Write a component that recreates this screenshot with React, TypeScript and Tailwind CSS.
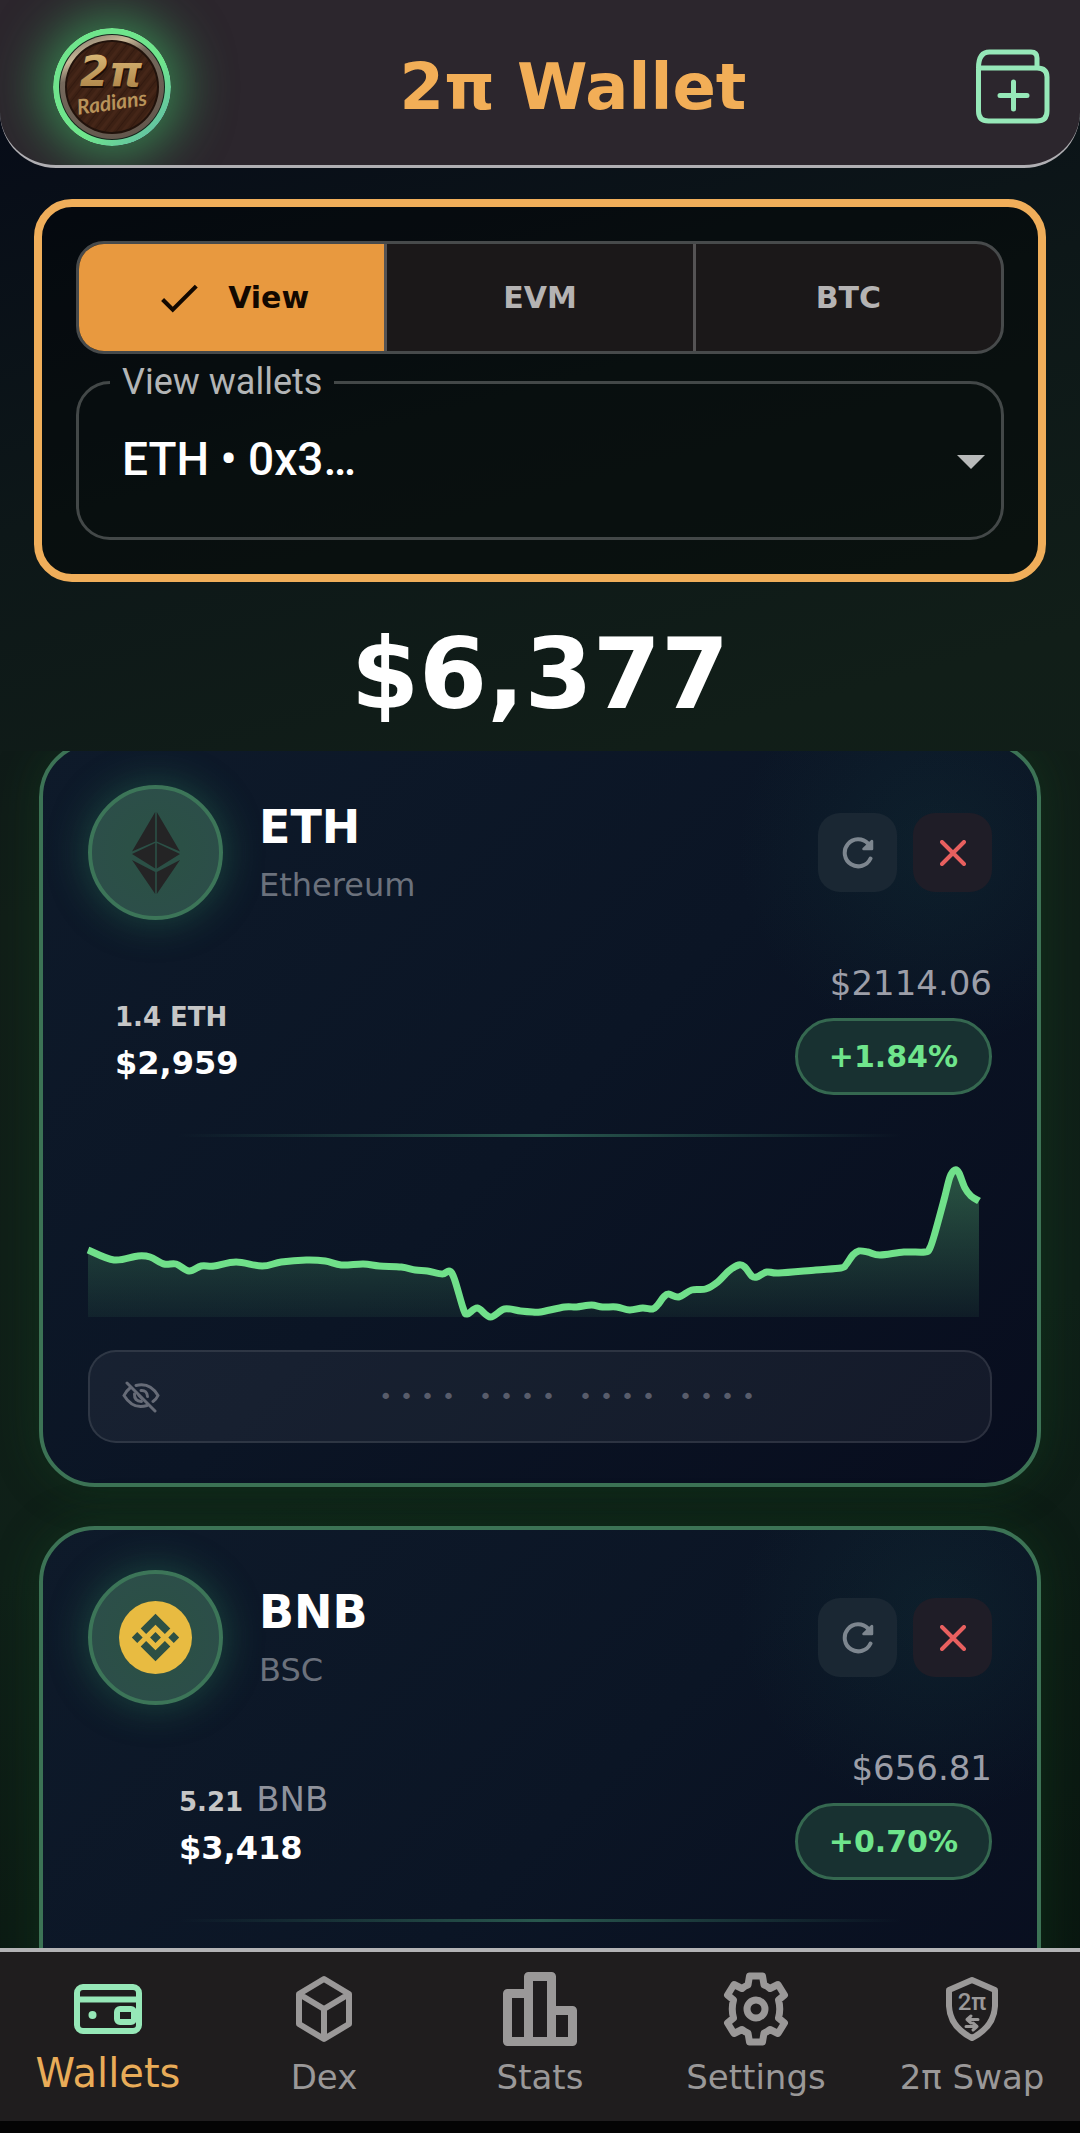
import { ReactNode, useId, useState } from "react";
import { MdCheck } from "react-icons/md";

interface Wallet {
  symbol: string;
  network: string;
  amount: ReactNode;
  fiat: string;
  price: string;
  change: string;
  balancePadding: string;
  icon: ReactNode;
  hasAddress: boolean;
}

type Point = [number, number];

const PRICE_POINTS: Point[] = [
  [0, 90], [26, 100], [50, 96], [62, 97], [76, 104], [88, 104], [101, 111], [113, 106], [126, 106],
  [148, 102], [174, 106], [193, 102], [218, 100], [237, 101], [253, 105], [275, 104], [291, 106],
  [313, 107], [327, 110], [339, 111], [354, 114], [361, 111], [366, 119], [375, 149], [379, 154],
  [389, 148], [402, 157], [416, 149], [432, 151], [444, 152], [452, 152], [476, 147], [488, 147],
  [503, 145], [514, 147], [528, 147], [541, 150], [554, 148], [564, 149], [569, 145], [575, 137],
  [580, 134], [590, 137], [603, 130], [617, 129], [629, 122], [640, 111], [650, 105], [656, 107],
  [663, 116], [668, 117], [678, 112], [690, 113], [727, 110], [752, 108], [757, 105], [764, 95],
  [770, 91], [779, 92], [791, 95], [815, 92], [836, 92], [841, 88], [846, 73], [855, 40], [861, 17],
  [866, 10], [870, 13], [876, 28], [882, 36], [890, 41],
];

// Catmull-Rom through the points, written as cubic segments.
function smoothPath(points: Point[]) {
  let d = `M${points[0][0]} ${points[0][1]}`;
  for (let i = 0; i < points.length - 1; i++) {
    const p0 = points[i - 1] ?? points[i];
    const p1 = points[i];
    const p2 = points[i + 1];
    const p3 = points[i + 2] ?? p2;
    d += ` C${p1[0] + (p2[0] - p0[0]) / 6} ${p1[1] + (p2[1] - p0[1]) / 6}`;
    d += ` ${p2[0] - (p3[0] - p1[0]) / 6} ${p2[1] - (p3[1] - p1[1]) / 6} ${p2[0]} ${p2[1]}`;
  }
  return d;
}

function BrandLogo() {
  return (
    <svg viewBox="0 0 118 118" className="size-[118px] shrink-0 rounded-full shadow-[0_0_50px_12px_rgba(62,190,100,0.6)]">
      <defs>
        <linearGradient id="ring" x1="0" y1="0" x2="1" y2="1">
          <stop offset="0" stopColor="#6fe58c" />
          <stop offset="0.6" stopColor="#6fe58c" />
          <stop offset="0.9" stopColor="#62bfa4" />
        </linearGradient>
        <linearGradient id="metal" x1="0.3" y1="0" x2="0.7" y2="1">
          <stop offset="0" stopColor="#8f8272" />
          <stop offset="0.15" stopColor="#c9b998" />
          <stop offset="0.3" stopColor="#75695c" />
          <stop offset="1" stopColor="#62564c" />
        </linearGradient>
        <pattern id="wood" width="9" height="9" patternUnits="userSpaceOnUse" patternTransform="rotate(38)">
          <rect width="9" height="9" fill="#3d2114" />
          <rect width="3" height="9" fill="#452618" />
          <rect x="5" width="1" height="9" fill="#331a10" />
        </pattern>
        <linearGradient id="gold" x1="0" y1="0" x2="0" y2="1">
          <stop offset="0" stopColor="#e0bf7d" />
          <stop offset="1" stopColor="#a67c41" />
        </linearGradient>
      </defs>
      <circle cx="59" cy="59" r="59" fill="url(#ring)" />
      <circle cx="59" cy="59" r="53" fill="#14251c" />
      <circle cx="59" cy="59" r="52" fill="url(#metal)" />
      <circle cx="59" cy="59" r="47" fill="#21120b" />
      <circle cx="59" cy="59" r="45" fill="url(#wood)" />
      <text x="59" y="60" textAnchor="middle" fill="#1c0d06" fontFamily="DejaVu Sans, sans-serif" fontWeight="700" fontStyle="italic" fontSize="42">2π</text>
      <text x="58" y="58" textAnchor="middle" fill="url(#gold)" fontFamily="DejaVu Sans, sans-serif" fontWeight="700" fontStyle="italic" fontSize="42">2π</text>
      <text x="59" y="82" textAnchor="middle" fill="#b8935a" fontFamily="Lato, sans-serif" fontWeight="700" fontStyle="italic" fontSize="21" transform="rotate(-8 59 76)">Radians</text>
    </svg>
  );
}

function AddWalletIcon() {
  return (
    <svg viewBox="0 0 76 76" className="size-[76px]" fill="none" stroke="#96e8b8" strokeWidth="5" strokeLinecap="round" strokeLinejoin="round">
      <path d="M3.500 20V62q0 10 10 10H62q10 0 10-10V28q0-9-10-9H3.500q0-16 11-16H56q6 0 6 6V19" />
      <path d="M38.500 33V60M25 46.500H52" />
    </svg>
  );
}

function EthIcon() {
  return (
    <svg viewBox="0 0 50 82" className="h-[82px] w-[50px]" fill="#242425">
      <path d="M24.200 0V29.500L1 39.500ZM25.800 0V29.500L49 39.500Z" />
      <path d="M24.200 31V56.500L1 42ZM25.800 31V56.500L49 42Z" />
      <path d="M24.200 60V82L1 48ZM25.800 60V82L49 48Z" />
    </svg>
  );
}

function BnbIcon() {
  return (
    <svg viewBox="0 0 74 74" className="size-[73px]">
      <circle cx="37" cy="37" r="37" fill="#e8bb41" />
      <g fill="#2d5044">
        <path d="M37 13 52 28 46.500 33.500 37 24 27.500 33.500 22 28ZM37 61 52 46 46.500 40.500 37 50 27.500 40.500 22 46Z" />
        <path d="M37 31.500 42.500 37 37 42.500 31.500 37ZM18.500 31.500 24 37 18.500 42.500 13 37ZM55.500 31.500 61 37 55.500 42.500 50 37Z" />
      </g>
    </svg>
  );
}

function RefreshIcon() {
  return (
    <svg viewBox="0 0 32 32" className="size-8" fill="none" stroke="#7d868f" strokeWidth="4" strokeLinecap="round" strokeLinejoin="round">
      <path d="M28.500 21.500A13.500 13.500 0 1 1 26 6.500" />
      <path d="M30 4V12H21.500Z" fill="#7d868f" strokeWidth="2.500" />
    </svg>
  );
}

function EyeOffIcon() {
  return (
    <svg viewBox="0 0 38 32" className="h-8 w-[38px] shrink-0" fill="none" stroke="#666b77" strokeWidth="3" strokeLinecap="round">
      <path d="M5 2 33 30" />
      <path d="M14 4.500Q28 1 36 14.500 34.500 18 31 20.500M8 7Q4 10 2 14.500 11 29 25 24.500" />
      <path d="M19 9.500Q25 9 25.500 15.500M12.500 13Q12 20 19.500 20.500M17 14.500 20 17.500" />
    </svg>
  );
}

function WalletIcon() {
  return (
    <svg viewBox="0 0 68 50" className="h-[50px] w-[68px]" fill="none" stroke="#96e8b8" strokeWidth="6">
      <rect x="3" y="3" width="62" height="44" rx="6" />
      <path d="M3 15.500H65" />
      <rect x="43" y="25" width="17" height="13" rx="3" />
      <circle cx="18.500" cy="31" r="4" fill="#96e8b8" stroke="none" />
    </svg>
  );
}

function DexIcon() {
  return (
    <svg viewBox="0 0 56 68" className="h-[68px] w-[56px]" fill="none" stroke="#9a9898" strokeWidth="6" strokeLinejoin="round">
      <path d="M28 4 53 19V49L28 64 3 49V19ZM3 19 28 34 53 19M28 34V64" />
    </svg>
  );
}

function StatsIcon() {
  return (
    <svg viewBox="0 0 74 74" className="size-[74px]" fill="none" stroke="#9a9898" strokeWidth="9" strokeLinejoin="round">
      <path d="M25.500 21.500H4.500V69.500H69.500V38.500H48.500" />
      <path d="M25.500 69.500V4.500H48.500V69.500" />
    </svg>
  );
}

function SettingsIcon() {
  return (
    <svg viewBox="-37 -37 74 74" className="size-[74px]" fill="none" stroke="#9a9898" strokeWidth="7" strokeLinejoin="round">
      <path d="M-6.500-33H6.500L8-24Q11-23 14-20.500L22-24.500 28.500-14 22.500-9Q25 0 22.500 9L28.500 14 22 24.500 14 20.500Q11 23 8 24L6.500 33H-6.500L-8 24Q-11 23-14 20.500L-22 24.500-28.500 14-22.500 9Q-25 0-22.500-9L-28.500-14-22-24.500-14-20.500Q-11-23-8-24Z" />
      <circle r="9" />
    </svg>
  );
}

function SwapIcon() {
  return (
    <svg viewBox="0 0 52 68" className="h-[68px] w-[52px]" fill="none" stroke="#9a9898" strokeWidth="6" strokeLinejoin="round">
      <path d="M26 5 49 15V31Q48 52 26 63 4 52 3 31V15Z" />
      <text x="26" y="35" textAnchor="middle" fill="#9a9898" stroke="none" fontFamily="Roboto, sans-serif" fontWeight="500" fontSize="24">2π</text>
      <path d="M32 44.500H21M25 41 21 44.500 25 48M20 51.500H31M27 48 31 51.500 27 55" strokeWidth="3" strokeLinecap="round" />
    </svg>
  );
}

function PriceChart() {
  const id = useId();
  const line = smoothPath(PRICE_POINTS);
  return (
    <svg viewBox="0 0 903 157" preserveAspectRatio="none" className="mt-[23px] h-[157px] w-full overflow-visible">
      <defs>
        <linearGradient id={id} gradientUnits="userSpaceOnUse" x1="0" y1="10" x2="0" y2="157">
          <stop offset="0" stopColor="#6fe58c" stopOpacity="0.32" />
          <stop offset="1" stopColor="#6fe58c" stopOpacity="0.06" />
        </linearGradient>
      </defs>
      <path d={`${line} V157 H0 Z`} fill={`url(#${id})`} />
      <path d={line} fill="none" stroke="#70e08a" strokeWidth="7" />
    </svg>
  );
}

function HiddenAddress() {
  return (
    <div className="mt-[33px] flex h-[93px] items-center rounded-[28px] border-2 border-white/10 bg-white/5 pr-4 pl-8">
      <button type="button" aria-label="Show address">
        <EyeOffIcon />
      </button>
      <div className="flex flex-1 justify-center gap-6 text-[22px] leading-6 text-[#585c6b]">
        {[0, 1, 2, 3].map((group) => (
          <div key={group} className="flex gap-2">
            <span>•</span>
            <span>•</span>
            <span>•</span>
            <span>•</span>
          </div>
        ))}
      </div>
    </div>
  );
}

function WalletCard({ wallet }: { wallet: Wallet }) {
  return (
    <article className="shrink-0 rounded-[56px] border-4 border-[#3c7355] bg-[radial-gradient(circle_at_90%_14%,rgba(30,100,90,0.15),transparent_200px),linear-gradient(135deg,#0e1a2a,#0b1525_50%,#080d1e)] px-[45px] py-10 shadow-[0_0_44px_rgba(20,80,35,0.35)]">
      <div className="flex items-center gap-9">
        <div className="flex size-[135px] items-center justify-center rounded-full border-4 border-[#3c7558] bg-[radial-gradient(circle,#2b5046_30%,#2d4d4b)] shadow-[0_0_40px_rgba(50,150,100,0.4)]">
          {wallet.icon}
        </div>
        <div className="flex-1">
          <h2 className="text-[46px] leading-12 font-bold text-white">{wallet.symbol}</h2>
          <p className="mt-4 text-[32px] leading-9 text-[#6b717c]">{wallet.network}</p>
        </div>
        <div className="flex gap-4">
          <button type="button" aria-label={`Refresh ${wallet.symbol}`} className="flex size-[79px] items-center justify-center rounded-[22px] bg-[#1a2733]">
            <RefreshIcon />
          </button>
          <button type="button" aria-label={`Remove ${wallet.symbol}`} className="flex size-[79px] items-center justify-center rounded-[22px] bg-[#1f1d27]">
            <svg viewBox="0 0 26 26" className="size-[26px]" stroke="#e8605f" strokeWidth="4" strokeLinecap="round">
              <path d="M2 2 24 24M24 2 2 24" />
            </svg>
          </button>
        </div>
      </div>

      <div className="mt-[45px] flex items-end justify-between">
        <div className={`pb-3 ${wallet.balancePadding}`}>
          <div className="text-[26px] leading-9 font-bold text-[#c6c6c6]">{wallet.amount}</div>
          <div className="mt-2 text-[32px] leading-10 font-bold text-white">{wallet.fiat}</div>
        </div>
        <div className="flex flex-col items-end">
          <div className="text-[34px] leading-9 text-[#9c9ea8]">{wallet.price}</div>
          <div className="mt-[17px] flex h-[77px] items-center rounded-full border-3 border-[#356850] bg-[#183131] px-[31px] text-[30px] font-bold text-[#6fe58c]">
            {wallet.change}
          </div>
        </div>
      </div>

      <div className="mt-[39px] h-[3px] bg-[linear-gradient(90deg,transparent_10%,#28574d_50%,transparent_90%)]" />
      <PriceChart />
      {wallet.hasAddress && <HiddenAddress />}
    </article>
  );
}

const WALLETS: Wallet[] = [
  {
    symbol: "ETH",
    network: "Ethereum",
    amount: "1.4 ETH",
    fiat: "$2,959",
    price: "$2114.06",
    change: "+1.84%",
    balancePadding: "pl-[27px]",
    icon: <EthIcon />,
    hasAddress: true,
  },
  {
    symbol: "BNB",
    network: "BSC",
    amount: (
      <>
        5.21 <span className="ml-1 text-[34px] font-normal text-[#8f929c]">BNB</span>
      </>
    ),
    fiat: "$3,418",
    price: "$656.81",
    change: "+0.70%",
    balancePadding: "pl-[91px]",
    icon: <BnbIcon />,
    hasAddress: false,
  },
];

const MODES = ["View", "EVM", "BTC"];

const NAV_ITEMS = [
  { label: "Wallets", icon: <WalletIcon /> },
  { label: "Dex", icon: <DexIcon /> },
  { label: "Stats", icon: <StatsIcon /> },
  { label: "Settings", icon: <SettingsIcon /> },
  { label: "2π Swap", icon: <SwapIcon /> },
];

export default function App() {
  const [mode, setMode] = useState("View");

  return (
    <div className="flex h-screen flex-col overflow-hidden bg-[linear-gradient(165deg,#070c18_5%,#0d1718_22%,#111e18_38%,#0f2018_65%,#08140e)] font-['DejaVu_Sans',sans-serif]">
      <header className="flex h-[168px] shrink-0 items-center justify-between overflow-hidden rounded-b-[56px] border-b-3 border-[#b0afb3] bg-[#2c262d] pt-2 pr-[29px] pl-[53px]">
        <BrandLogo />
        <h1 className="text-[64px] leading-none font-bold text-[#f2ae57]">2π Wallet</h1>
        <button type="button" aria-label="Add wallet">
          <AddWalletIcon />
        </button>
      </header>

      <section className="mx-[34px] mt-[31px] shrink-0 rounded-[38px] border-8 border-[#f0ae5a] bg-black/35 p-[34px]">
        <div className="flex h-[113px] overflow-hidden rounded-[28px] border-3 border-[#474a4b] bg-[#1b1819]">
          {MODES.map((item) => (
            <button
              key={item}
              type="button"
              aria-pressed={mode === item}
              onClick={() => setMode(item)}
              className={`flex flex-1 items-center justify-center gap-6 text-[30px] font-bold not-last:border-r-3 not-last:border-[#555354] ${
                mode === item ? "bg-[#e8993f] text-[#120800]" : "text-[#b5b3b3]"
              }`}
            >
              {mode === item && <MdCheck className="size-[50px]" />}
              {item}
            </button>
          ))}
        </div>

        <fieldset className="relative mt-[11px] rounded-[34px] border-3 border-[#434848] pb-[18px] pl-[31px] font-[Roboto,sans-serif]">
          <legend className="px-3 text-[36px] leading-[34px] text-[#b3b5b6]">
            <label htmlFor="wallet">View wallets</label>
          </legend>
          <select id="wallet" className="block h-[120px] w-full appearance-none bg-transparent pl-3 text-[46px] font-medium text-white outline-none">
            <option>ETH • 0x3…</option>
          </select>
          <svg viewBox="0 0 28 14" className="pointer-events-none absolute top-14 right-4 h-[14px] w-7" fill="#b8baba">
            <path d="M0 0H28L14 14Z" />
          </svg>
        </fieldset>
      </section>

      <div className="shrink-0 pt-9 pb-[21px] text-center text-[98px] leading-[112px] font-bold text-white">$6,377</div>

      <main className="min-h-0 flex-1 overflow-hidden">
        <div className="-mt-[10px] flex flex-col gap-[39px] px-[39px]">
          {WALLETS.map((wallet) => (
            <WalletCard key={wallet.symbol} wallet={wallet} />
          ))}
        </div>
      </main>

      <nav className="shrink-0 border-t-4 border-[#b3b3b5] bg-[#1f1d1e]">
        <div className="grid h-[169px] grid-cols-5">
          {NAV_ITEMS.map((item, index) => (
            <a
              key={item.label}
              href="#"
              aria-current={index === 0 ? "page" : undefined}
              className={`flex flex-col items-center pt-5 whitespace-nowrap ${
                index === 0 ? "text-[40px] leading-10 text-[#e9ac58]" : "text-[34px] leading-12 text-[#9a9898]"
              }`}
            >
              <span className="flex h-[74px] items-center">{item.icon}</span>
              <span className="mt-[7px]">{item.label}</span>
            </a>
          ))}
        </div>
        <div className="h-3 bg-[#040404]" />
      </nav>
    </div>
  );
}
